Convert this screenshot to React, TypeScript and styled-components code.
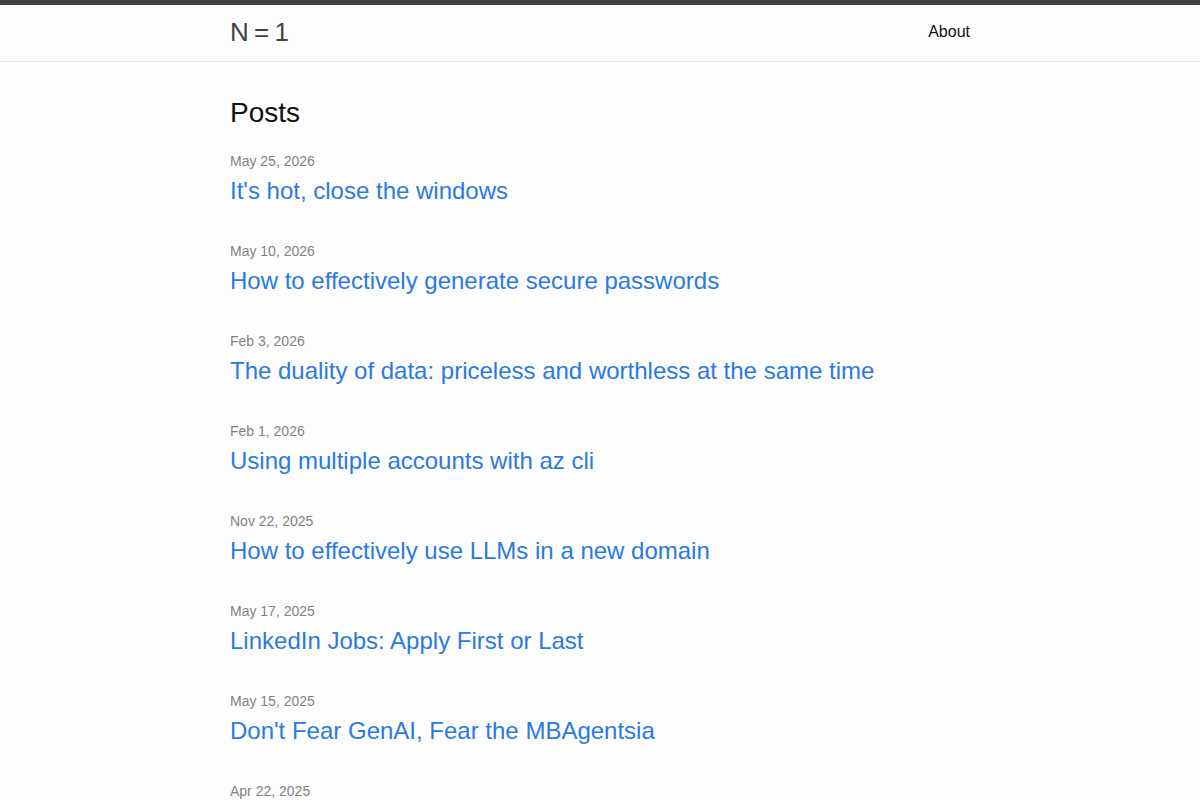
import { createGlobalStyle, styled } from "styled-components";

const posts = [
  { date: "May 25, 2026", title: "It's hot, close the windows" },
  { date: "May 10, 2026", title: "How to effectively generate secure passwords" },
  { date: "Feb 3, 2026", title: "The duality of data: priceless and worthless at the same time" },
  { date: "Feb 1, 2026", title: "Using multiple accounts with az cli" },
  { date: "Nov 22, 2025", title: "How to effectively use LLMs in a new domain" },
  { date: "May 17, 2025", title: "LinkedIn Jobs: Apply First or Last" },
  { date: "May 15, 2025", title: "Don't Fear GenAI, Fear the MBAgentsia" },
  { date: "Apr 22, 2025", title: "Why your side project never ships" },
];

function App() {
  return (
    <>
      <GlobalStyle />
      <SiteHeader>
        <Wrapper>
          <SiteTitle href="#">N = 1</SiteTitle>
          <Nav>
            <NavLink href="#">About</NavLink>
          </Nav>
        </Wrapper>
      </SiteHeader>
      <PageContent>
        <Wrapper $column>
          <Heading>Posts</Heading>
          <PostList>
            {posts.map((el) => (
              <li key={el.title}>
                <PostMeta>{el.date}</PostMeta>
                <PostTitle>
                  <PostLink href="#">{el.title}</PostLink>
                </PostTitle>
              </li>
            ))}
          </PostList>
        </Wrapper>
      </PageContent>
    </>
  );
}

export default App;

const GlobalStyle = createGlobalStyle`
  html, body {
    margin: 0;
    padding: 0;
  }
  body {
    background-color: #fdfdfd;
    color: #111111;
    font-family: "Liberation Sans", Arial, sans-serif;
    font-size: 16px;
    line-height: 1.5;
    overflow: hidden;
  }
`;

const Wrapper = styled.div<{ $column?: boolean }>`
  max-width: 740px;
  margin: 0 auto;
  padding: 0 30px;
  display: flex;
  flex-direction: ${(p) => (p.$column ? "column" : "row")};
  justify-content: space-between;
`;

const SiteHeader = styled.header`
  border-top: 5px solid #424242;
  border-bottom: 1px solid #e8e8e8;
  min-height: 55.95px;
`;

const SiteTitle = styled.a`
  font-size: 26px;
  font-weight: 300;
  line-height: 54px;
  letter-spacing: -1px;
  color: #424242;
  text-decoration: none;
`;

const Nav = styled.nav`
  display: flex;
  align-items: center;
  line-height: 54px;
`;

const NavLink = styled.a`
  color: #111111;
  text-decoration: none;
  font-size: 16px;
`;

const PageContent = styled.main`
  padding: 30px 0;
`;

const Heading = styled.h2`
  font-size: 28px;
  font-weight: 400;
  line-height: 42px;
  margin: 0 0 17px;
`;

const PostList = styled.ul`
  list-style: none;
  margin: 0;
  padding: 0;
  li {
    margin-bottom: 32px;
  }
`;

const PostMeta = styled.span`
  display: block;
  font-size: 14px;
  line-height: 21px;
  color: #828282;
`;

const PostTitle = styled.h3`
  font-size: 24px;
  font-weight: 400;
  line-height: 36px;
  margin: 1px 0 0;
`;

const PostLink = styled.a`
  color: #2a7ae2;
  text-decoration: none;
`;
